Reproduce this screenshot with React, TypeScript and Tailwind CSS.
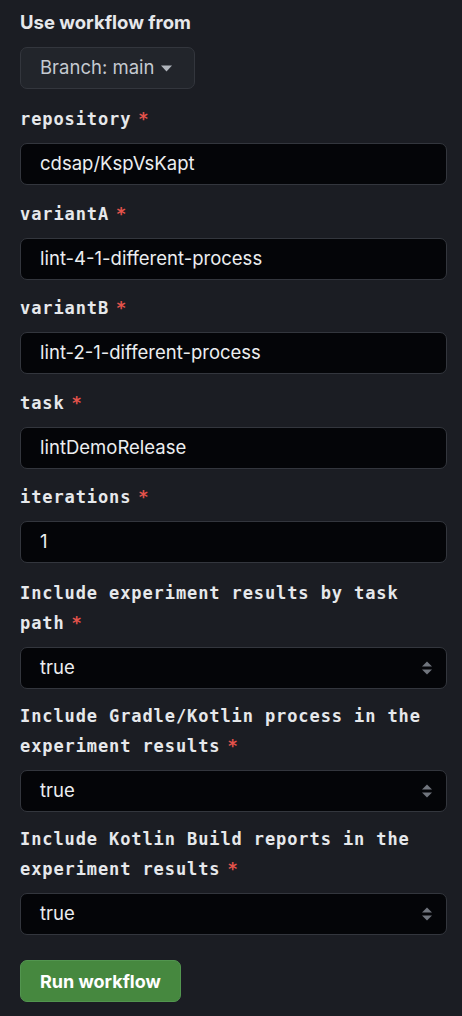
const FIELDS = [
  { label: 'repository', value: 'cdsap/KspVsKapt' },
  { label: 'variantA', value: 'lint-4-1-different-process' },
  { label: 'variantB', value: 'lint-2-1-different-process' },
  { label: 'task', value: 'lintDemoRelease' },
  { label: 'iterations', value: '1' },
]

// long labels are split where the panel wraps them
const SELECTS = [
  { lines: ['Include experiment results by task', 'path'], value: 'true' },
  { lines: ['Include Gradle/Kotlin process in the', 'experiment results'], value: 'true' },
  { lines: ['Include Kotlin Build reports in the', 'experiment results'], value: 'true' },
]

const sans = { fontFamily: 'Inter, "Noto Sans", sans-serif' }
const mono = { fontFamily: '"DejaVu Sans Mono", "Liberation Mono", monospace' }

function FieldLabel({ lines }: { lines: string[] }) {
  return (
    <div
      className="pt-[2px] text-[17px] font-bold leading-[30px] tracking-[0.9px] text-[#e6e8eb]"
      style={mono}
    >
      {lines.map((line, i) => (
        <div key={line}>
          {line}
          {i === lines.length - 1 && (
            <span className="ml-[7px] text-[#e5534b]">*</span>
          )}
        </div>
      ))}
    </div>
  )
}

function SelectArrows() {
  return (
    <svg className="w-[12px] h-[16px]" viewBox="0 0 12 16" fill="#70757d">
      <path d="M6 1.5L11 6.5H1z" />
      <path d="M6 14.5L11 9.5H1z" />
    </svg>
  )
}

export default function App() {
  return (
    <div className="min-h-screen w-full bg-[#1b1d23] pl-[20px] pr-[15px] pt-[9px] pb-[20px]" style={sans}>
      <div className="text-[18.5px] font-bold leading-[26px] text-[#e6e8eb]">
        Use workflow from
      </div>

      <button className="mt-[12px] flex h-[42px] items-center gap-[7px] rounded-[7px] border border-[#33363d] bg-[#22252b] pl-[19px] pr-[22px] text-[18.5px] text-[#c5cad1]">
        Branch: main
        <svg className="w-[11px] h-[7px]" viewBox="0 0 11 7" fill="#b0b5bc">
          <path d="M0 0.5h11L5.5 6.5z" />
        </svg>
      </button>

      {/* Text inputs */}
      <div className="mt-[13px] flex flex-col gap-[11.5px]">
        {FIELDS.map((f) => (
          <div key={f.label}>
            <FieldLabel lines={[f.label]} />
            <div className="mt-[9px] flex h-[42px] items-center rounded-[7px] border border-[#33363d] bg-[#040508] px-[19px] text-[18.5px] text-[#eceef0]">
              {f.value}
            </div>
          </div>
        ))}
      </div>

      {/* Boolean selects */}
      <div className="mt-[13px] flex flex-col gap-[10px]">
        {SELECTS.map((s) => (
          <div key={s.lines.join(' ')}>
            <FieldLabel lines={s.lines} />
            <div className="mt-[9px] flex h-[42px] items-center justify-between rounded-[7px] border border-[#33363d] bg-[#040508] pl-[19px] pr-[13px] text-[18.5px] text-[#eceef0]">
              <span>{s.value}</span>
              <SelectArrows />
            </div>
          </div>
        ))}
      </div>

      <button className="mt-[25px] flex h-[42px] items-center rounded-[7px] border border-[#52954f] bg-[#46883f] px-[19px] text-[18px] font-bold text-white">
        Run workflow
      </button>
    </div>
  )
}
